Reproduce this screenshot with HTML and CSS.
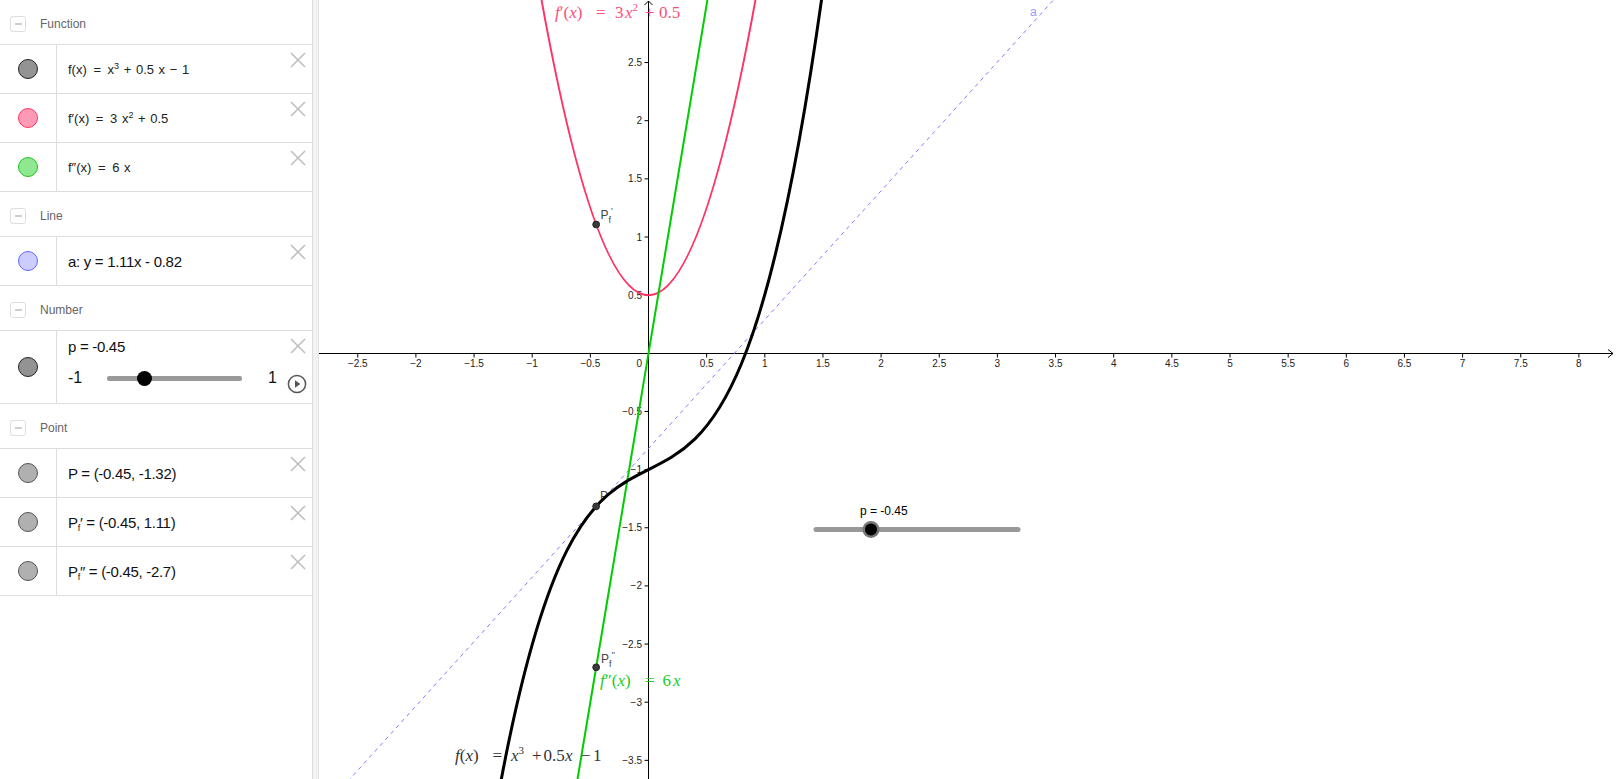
FILE: index.html
```html
<!DOCTYPE html>
<html>
<head>
<meta charset="utf-8">
<title>Derivatives</title>
<link rel="stylesheet" href="styles.css">
</head>
<body>
<div class="app">
  <aside class="algebra">
    <section class="group">
      <div class="group-head"><span class="toggle"><span class="toggle-bar"></span></span><span class="group-title">Function</span></div>
      <div class="item">
        <div class="marble-col"><span class="marble m-dark"></span></div>
        <div class="item-body"><span class="formula">f(x) <span class="eq">=</span> x<sup>3</sup> + 0.5 x − 1</span></div>
        <span class="close"><svg viewBox="0 0 16 16" width="16" height="16"><path d="M1 1L15 15M15 1L1 15"/></svg></span>
      </div>
      <div class="item">
        <div class="marble-col"><span class="marble m-pink"></span></div>
        <div class="item-body"><span class="formula">f′(x) <span class="eq">=</span> 3 x<sup>2</sup> + 0.5</span></div>
        <span class="close"><svg viewBox="0 0 16 16" width="16" height="16"><path d="M1 1L15 15M15 1L1 15"/></svg></span>
      </div>
      <div class="item">
        <div class="marble-col"><span class="marble m-green"></span></div>
        <div class="item-body"><span class="formula">f″(x) <span class="eq">=</span> 6 x</span></div>
        <span class="close"><svg viewBox="0 0 16 16" width="16" height="16"><path d="M1 1L15 15M15 1L1 15"/></svg></span>
      </div>
    </section>
    <section class="group">
      <div class="group-head"><span class="toggle"><span class="toggle-bar"></span></span><span class="group-title">Line</span></div>
      <div class="item">
        <div class="marble-col"><span class="marble m-blue"></span></div>
        <div class="item-body"><span class="value">a: y = 1.11x - 0.82</span></div>
        <span class="close"><svg viewBox="0 0 16 16" width="16" height="16"><path d="M1 1L15 15M15 1L1 15"/></svg></span>
      </div>
    </section>
    <section class="group">
      <div class="group-head"><span class="toggle"><span class="toggle-bar"></span></span><span class="group-title">Number</span></div>
      <div class="item item-slider">
        <div class="marble-col"><span class="marble m-dark"></span></div>
        <div class="slider-body">
          <div class="value">p = -0.45</div>
          <div class="slider-row">
            <span class="lim lim-min">-1</span>
            <span class="track"><span class="knob" style="left:27.5%"></span></span>
            <span class="lim lim-max">1</span>
          </div>
        </div>
        <div class="actions">
          <span class="close"><svg viewBox="0 0 16 16" width="16" height="16"><path d="M1 1L15 15M15 1L1 15"/></svg></span>
          <span class="play"><svg viewBox="0 0 20 20" width="20" height="20"><circle cx="10" cy="10" r="8.6"/><path d="M8 6.2L13.4 10L8 13.8Z"/></svg></span>
        </div>
      </div>
    </section>
    <section class="group">
      <div class="group-head"><span class="toggle"><span class="toggle-bar"></span></span><span class="group-title">Point</span></div>
      <div class="item">
        <div class="marble-col"><span class="marble m-gray"></span></div>
        <div class="item-body"><span class="value">P = (-0.45, -1.32)</span></div>
        <span class="close"><svg viewBox="0 0 16 16" width="16" height="16"><path d="M1 1L15 15M15 1L1 15"/></svg></span>
      </div>
      <div class="item">
        <div class="marble-col"><span class="marble m-gray"></span></div>
        <div class="item-body"><span class="value">P<sub>f</sub>′ = (-0.45, 1.11)</span></div>
        <span class="close"><svg viewBox="0 0 16 16" width="16" height="16"><path d="M1 1L15 15M15 1L1 15"/></svg></span>
      </div>
      <div class="item">
        <div class="marble-col"><span class="marble m-gray"></span></div>
        <div class="item-body"><span class="value">P<sub>f</sub>′′ = (-0.45, -2.7)</span></div>
        <span class="close"><svg viewBox="0 0 16 16" width="16" height="16"><path d="M1 1L15 15M15 1L1 15"/></svg></span>
      </div>
    </section>
  </aside>
  <div class="splitter"></div>
  <main class="canvas">
    <svg class="graph" width="1297" height="779" viewBox="0 0 1297 779">
      <!-- axes -->
      <g class="axis">
        <line x1="0" y1="353.5" x2="1294" y2="353.5"/>
        <path class="arrow" d="M1289 349.5L1294 353.5L1289 357.5"/>
        <line x1="329.5" y1="1" x2="329.5" y2="779"/>
        <path class="arrow" d="M325.5 5L329.5 1L333.5 5"/>
        <path class="ticks" d="M38.75 353.5v4M96.9 353.5v4M155.05 353.5v4M213.2 353.5v4M271.35 353.5v4M387.65 353.5v4M445.8 353.5v4M503.95 353.5v4M562.1 353.5v4M620.25 353.5v4M678.4 353.5v4M736.55 353.5v4M794.7 353.5v4M852.85 353.5v4M911 353.5v4M969.15 353.5v4M1027.3 353.5v4M1085.45 353.5v4M1143.6 353.5v4M1201.75 353.5v4M1259.9 353.5v4
          M325.5 62.55h4M325.5 120.7h4M325.5 178.85h4M325.5 237h4M325.5 295.15h4M325.5 411.45h4M325.5 469.6h4M325.5 527.75h4M325.5 585.9h4M325.5 644.05h4M325.5 702.2h4M325.5 760.35h4"/>
      </g>
      <g class="xlabels">
        <text x="38.75" y="367">−2.5</text>
        <text x="96.9" y="367">−2</text>
        <text x="155.05" y="367">−1.5</text>
        <text x="213.2" y="367">−1</text>
        <text x="271.35" y="367">−0.5</text>
        <text x="387.65" y="367">0.5</text>
        <text x="445.8" y="367">1</text>
        <text x="503.95" y="367">1.5</text>
        <text x="562.1" y="367">2</text>
        <text x="620.25" y="367">2.5</text>
        <text x="678.4" y="367">3</text>
        <text x="736.55" y="367">3.5</text>
        <text x="794.7" y="367">4</text>
        <text x="852.85" y="367">4.5</text>
        <text x="911" y="367">5</text>
        <text x="969.15" y="367">5.5</text>
        <text x="1027.3" y="367">6</text>
        <text x="1085.45" y="367">6.5</text>
        <text x="1143.6" y="367">7</text>
        <text x="1201.75" y="367">7.5</text>
        <text x="1259.9" y="367">8</text>
      </g>
      <g class="ylabels">
        <text x="323" y="66">2.5</text>
        <text x="323" y="124.2">2</text>
        <text x="323" y="182.3">1.5</text>
        <text x="323" y="240.5">1</text>
        <text x="323" y="298.6">0.5</text>
        <text x="323" y="367">0</text>
        <text x="323" y="414.9">−0.5</text>
        <text x="323" y="473.1">−1</text>
        <text x="323" y="531.2">−1.5</text>
        <text x="323" y="589.4">−2</text>
        <text x="323" y="647.5">−2.5</text>
        <text x="323" y="705.7">−3</text>
        <text x="323" y="763.8">−3.5</text>
      </g>

      <!-- tangent line a -->
      <line class="tangent" x1="-19.4" y1="834.8" x2="794.7" y2="-66.8"/>
      <text class="lbl-a" x="711" y="16">a</text>

      <!-- f'(x) parabola -->
      <path class="fprime" d="M201.57 -127.02Q329.5 717.32 457.43 -127.02"/>
      <!-- f''(x) line -->
      <line class="fsecond" x1="248.09" y1="841.76" x2="399.28" y2="-65.38"/>

      <!-- point labels -->
      <text class="plabel" x="281" y="500">P</text>
      <!-- f(x) cubic -->
      <path class="f" d="M166.68 870.14C282.98 128.14 399.28 851.53 515.58 -99.8"/>

      <!-- points -->
      <circle class="pt" cx="277.16" cy="506.35" r="3.4"/>
      <circle class="pt" cx="277.16" cy="224.5" r="3.4"/>
      <circle class="pt" cx="277.16" cy="667.3" r="3.4"/>

      <text class="plabel" x="281.5" y="218.5">P<tspan class="psub" dy="4">f</tspan><tspan class="psup" dy="-9">'</tspan></text>
      <text class="plabel" x="282" y="663">P<tspan class="psub" dy="4">f</tspan><tspan class="psup" dy="-9">''</tspan></text>

      <!-- function labels -->
      <text class="mlabel lbl-pink" y="18"><tspan x="236" class="it">f</tspan>′(<tspan class="it">x</tspan>)<tspan x="277">=</tspan><tspan x="296">3</tspan><tspan x="306" class="it">x</tspan><tspan class="sup" dy="-7">2</tspan><tspan x="326" dy="7">+</tspan><tspan x="340">0.5</tspan></text>
      <text class="mlabel lbl-green" y="686"><tspan x="281" class="it">f</tspan>″(<tspan class="it">x</tspan>)<tspan x="326">=</tspan><tspan x="343.5">6</tspan><tspan x="354" class="it">x</tspan></text>
      <text class="mlabel lbl-black" y="761"><tspan x="136" class="it">f</tspan>(<tspan class="it">x</tspan>)<tspan x="173.5">=</tspan><tspan x="192" class="it">x</tspan><tspan class="sup" dy="-7">3</tspan><tspan x="213" dy="7">+</tspan><tspan x="224.5">0.5</tspan><tspan x="246" class="it">x</tspan><tspan x="262">−</tspan><tspan x="274">1</tspan></text>

      <!-- slider on canvas -->
      <text class="slabel" x="541" y="515">p = -0.45</text>
      <line class="strack" x1="497" y1="529.5" x2="699" y2="529.5"/>
      <circle class="sknob-ring" cx="552" cy="529.5" r="8.5"/>
      <circle class="sknob" cx="552" cy="529.5" r="6"/>
    </svg>
  </main>
</div>
</body>
</html>
```
FILE: styles.css
```css
* { box-sizing: border-box; }
html, body { margin: 0; padding: 0; }
body {
  font-family: "Liberation Sans", Arial, sans-serif;
  background: #fff;
  color: #222;
  overflow: hidden;
}
.app { display: flex; width: 1616px; height: 779px; }

/* ---------- algebra view ---------- */
.algebra { width: 312px; flex: none; background: #fff; }
.splitter {
  width: 7px; flex: none;
  background: #f2f2f2;
  border-left: 1px solid #dcdcdc;
  border-right: 1px solid #e4e4e4;
}
.group-head {
  height: 45px;
  display: flex;
  align-items: center;
  padding: 3px 0 0 10px;
  border-bottom: 1px solid #ddd;
}
.toggle {
  width: 16px; height: 16px;
  border: 1px solid #dedede;
  border-radius: 3px;
  display: flex; align-items: center; justify-content: center;
  margin-right: 14px;
}
.toggle-bar { width: 7px; height: 2px; background: #cfcfcf; }
.group-title { font-size: 12px; color: #666; }

.item { display: flex; height: 49px; border-bottom: 1px solid #ddd; }
.item-slider { height: 73px; }
.marble-col {
  width: 57px; flex: none;
  border-right: 1px solid #ddd;
  display: flex; align-items: center; justify-content: center;
}
.marble { width: 20px; height: 20px; border-radius: 50%; border: 1px solid #333; }
.m-dark { background: #939393; border-color: #222; }
.m-pink { background: #ff9ab4; border-color: #ff3366; }
.m-green { background: #8fe88f; border-color: #22c222; }
.m-blue { background: #ccccff; border-color: #6666ff; }
.m-gray { background: #b0b0b0; border-color: #555; }

.item-body { flex: 1; display: flex; align-items: center; padding-left: 11px; }
.formula { font-size: 13px; color: #222; word-spacing: 1px; }
.formula sup { font-size: 9px; vertical-align: 5px; line-height: 0; }
.formula .eq { margin: 0 2px; }
.value { font-size: 15px; letter-spacing: -0.3px; color: #111; }
.value sub { font-size: 9px; vertical-align: -3px; line-height: 0; }

.close { flex: none; width: 16px; height: 16px; margin: 7px 6px 0 0; }
.close svg { display: block; }
.close path { stroke: #bdbdbd; stroke-width: 1.5; fill: none; }

.slider-body { flex: 1; padding: 7px 0 0 11px; }
.slider-row { display: flex; align-items: center; margin-top: 13px; height: 20px; }
.lim { font-size: 16px; color: #111; }
.lim-min { width: 39px; }
.lim-max { margin-left: 26px; }
.track { position: relative; width: 135px; height: 5px; background: #999; border-radius: 2px; }
.knob {
  position: absolute; top: 50%;
  width: 15px; height: 15px; margin: -7.5px 0 0 -7.5px;
  border-radius: 50%; background: #000;
}
.actions {
  flex: none; width: 22px; margin-right: 5px;
  display: flex; flex-direction: column; align-items: flex-end; justify-content: space-between;
  padding-bottom: 9px;
}
.actions .close { margin: 7px 1px 0 0; }
.play svg { display: block; }
.play circle { fill: none; stroke: #555; stroke-width: 1.5; }
.play path { fill: #555; }

/* ---------- graphics view ---------- */
.canvas { flex: 1; position: relative; background: #fff; overflow: hidden; }
.graph { display: block; }
.axis line, .axis path { stroke: #000; stroke-width: 1; fill: none; }
.xlabels text { font-family: "Liberation Sans", Arial, sans-serif; font-size: 10px; fill: #222; text-anchor: middle; }
.ylabels text { font-family: "Liberation Sans", Arial, sans-serif; font-size: 10px; fill: #222; text-anchor: end; }

.tangent { stroke: #8080ff; stroke-width: 1; stroke-dasharray: 4 4; }
.lbl-a { font-family: "Liberation Sans", Arial, sans-serif; font-size: 12px; fill: #9a9aff; }
.fprime { stroke: #ff3366; stroke-width: 2; fill: none; }
.fsecond { stroke: #00cc00; stroke-width: 2; }
.f { stroke: #000; stroke-width: 3; fill: none; }
.pt { fill: #3a3a3a; stroke: #222; stroke-width: 1; }
.plabel { font-family: "Liberation Sans", Arial, sans-serif; font-size: 12px; fill: #444; }
.psub { font-size: 9px; }
.psup { font-size: 9px; }

.mlabel { font-family: "Liberation Serif", "Times New Roman", serif; font-size: 17px; }
.mlabel .it { font-style: italic; }
.mlabel .sup { font-size: 11px; }
.lbl-pink { fill: #ff4d79; }
.lbl-green { fill: #1ccc1c; }
.lbl-black { fill: #333; }

.slabel { font-family: "Liberation Sans", Arial, sans-serif; font-size: 12px; fill: #000; }
.strack { stroke: #999; stroke-width: 5; stroke-linecap: round; }
.sknob-ring { fill: #777; }
.sknob { fill: #000; }
```
